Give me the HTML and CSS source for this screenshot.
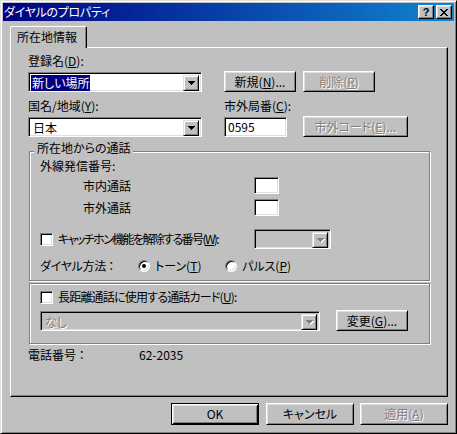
FILE: index.html
```html
<!DOCTYPE html>
<html lang="ja">
<head>
<meta charset="utf-8">
<title>ダイヤルのプロパティ</title>
<link rel="stylesheet" href="styles.css">
</head>
<body>
<div class="window">
  <div class="titlebar">
    <span class="title">ダイヤルのプロパティ</span>
    <div class="tb-buttons">
      <span class="tb-btn tb-help">?</span>
      <span class="tb-btn tb-close"><svg width="8" height="7" viewBox="0 0 8 7" shape-rendering="crispEdges"><path d="M0 0h2v1H0zM6 0h2v1H6zM1 1h2v1H1zM5 1h2v1H5zM2 2h4v1H2zM3 3h2v1H3zM2 4h4v1H2zM1 5h2v1H1zM5 5h2v1H5zM0 6h2v1H0zM6 6h2v1H6z" fill="#000"/></svg></span>
    </div>
  </div>

  <div class="tabs"><div class="tab">所在地情報</div></div>

  <div class="panel">
    <div class="row row-first">
      <div class="col col-combo">
        <div class="label">登録名(<u>D</u>):</div>
        <div class="field combo">
          <span class="combo-text"><span class="sel">新しい場所</span></span>
          <span class="dd"><svg width="7" height="4" viewBox="0 0 7 4" shape-rendering="crispEdges"><path d="M0 0h7v1H0zM1 1h5v1H1zM2 2h3v1H2zM3 3h1v1H3z" fill="#000"/></svg></span>
        </div>
      </div>
      <button class="btn btn-new">新規(<u>N</u>)...</button>
      <button class="btn btn-del disabled">削除(<u>R</u>)</button>
    </div>

    <div class="row row-second">
      <div class="col col-combo">
        <div class="label">国名/地域(<u>Y</u>):</div>
        <div class="field combo">
          <span class="combo-text combo-plain">日本</span>
          <span class="dd"><svg width="7" height="4" viewBox="0 0 7 4" shape-rendering="crispEdges"><path d="M0 0h7v1H0zM1 1h5v1H1zM2 2h3v1H2zM3 3h1v1H3z" fill="#000"/></svg></span>
        </div>
      </div>
      <div class="col col-area">
        <div class="label">市外局番(<u>C</u>):</div>
        <div class="field edit-area">0595</div>
      </div>
      <button class="btn btn-areacode disabled">市外コード(<u>E</u>)...</button>
    </div>

    <div class="group group-calls">
      <div class="group-title">所在地からの通話</div>
      <div class="g-label">外線発信番号:</div>
      <div class="g-row g-row-edit g-row-local">
        <span class="g-left g-indent">市内通話</span>
        <span class="field edit-small"></span>
      </div>
      <div class="g-row g-row-edit g-row-long">
        <span class="g-left g-indent">市外通話</span>
        <span class="field edit-small"></span>
      </div>
      <div class="g-row g-row-wait">
        <span class="g-left check-item">
          <span class="field checkbox"></span>
          <span class="check-label label-wait">キャッチホン機能を解除する番号(<u>W</u>):</span>
        </span>
        <span class="field combo combo-disabled combo-wait">
          <span class="combo-text"></span>
          <span class="dd"><svg width="8" height="5" viewBox="0 0 8 5" shape-rendering="crispEdges"><path d="M1 1h7v1H1zM2 2h5v1H2zM3 3h3v1H3zM4 4h1v1H4z" fill="#fff"/><path d="M0 0h7v1H0zM1 1h5v1H1zM2 2h3v1H2zM3 3h1v1H3z" fill="#808080"/></svg></span>
        </span>
      </div>
      <div class="g-row g-row-dial">
        <span class="dial-label">ダイヤル方法 ：</span>
        <span class="radio-item radio-tone">
          <span class="field radio"><span class="dot"></span></span>
          <span class="radio-label">トーン(<u>T</u>)</span>
        </span>
        <span class="radio-item">
          <span class="field radio"></span>
          <span class="radio-label">パルス(<u>P</u>)</span>
        </span>
      </div>
    </div>

    <div class="group group-card">
      <div class="check-item">
        <span class="field checkbox"></span>
        <span class="check-label label-card">長距離通話に使用する通話カード(<u>U</u>):</span>
      </div>
      <div class="card-row">
        <span class="field combo combo-disabled combo-card">
          <span class="combo-text disabled-text">なし</span>
          <span class="dd"><svg width="8" height="5" viewBox="0 0 8 5" shape-rendering="crispEdges"><path d="M1 1h7v1H1zM2 2h5v1H2zM3 3h3v1H3zM4 4h1v1H4z" fill="#fff"/><path d="M0 0h7v1H0zM1 1h5v1H1zM2 2h3v1H2zM3 3h1v1H3z" fill="#808080"/></svg></span>
        </span>
        <button class="btn btn-change">変更(<u>G</u>)...</button>
      </div>
    </div>

    <div class="phone-row">
      <span class="phone-label">電話番号 ：</span>
      <span class="phone-value">62-2035</span>
    </div>
  </div>

  <div class="footer">
    <button class="btn btn-footer btn-default">OK</button>
    <button class="btn btn-footer btn-cancel">キャンセル</button>
    <button class="btn btn-footer btn-apply disabled">適用(<u>A</u>)</button>
  </div>
</div>
</body>
</html>
```

FILE: styles.css
```css
* {
  box-sizing: border-box;
}

html,
body {
  margin: 0;
  padding: 0;
}

body {
  width: 457px;
  height: 434px;
  overflow: hidden;
  background: #c0c0c0;
  color: #000;
  font-family: "Noto Sans CJK JP", "Noto Sans", sans-serif;
  font-size: 12px;
  line-height: 14px;
  font-feature-settings: "palt";
}

u {
  text-decoration: underline;
  text-underline-offset: 1px;
}

/* window frame */
.window {
  width: 457px;
  height: 434px;
  padding: 2px;
  background: #c0c0c0;
  border: 1px solid;
  border-color: #dfdfdf #000 #000 #dfdfdf;
  box-shadow: inset 1px 1px #fff, inset -1px -1px #808080;
  display: flex;
  flex-direction: column;
}

.titlebar {
  height: 18px;
  flex: none;
  display: flex;
  align-items: center;
  justify-content: space-between;
  padding: 0 2px 0 1px;
  background: linear-gradient(to right, #000080, #1084d0);
  color: #fff;
}

.title {
  white-space: nowrap;
  letter-spacing: -0.3px;
}

.tb-buttons {
  display: flex;
  gap: 2px;
}

.tb-btn {
  width: 16px;
  height: 14px;
  display: flex;
  align-items: center;
  justify-content: center;
  background: #c0c0c0;
  color: #000;
  border: 1px solid;
  border-color: #fff #000 #000 #fff;
  box-shadow: inset -1px -1px #808080, inset 1px 1px #dfdfdf;
}

.tb-help {
  font-family: "Liberation Sans", sans-serif;
  font-weight: bold;
  font-size: 11px;
  line-height: 1;
  padding-top: 1px;
}

/* tabs */
.tabs {
  margin: 5px 0 0 7px;
  display: flex;
}

.tab {
  position: relative;
  z-index: 1;
  width: 77px;
  height: 22px;
  margin-bottom: -1px;
  padding: 3px 0 0 6px;
  background: #c0c0c0;
  border-top: 1px solid #fff;
  border-left: 1px solid #fff;
  border-right: 1px solid #000;
  border-radius: 2px 2px 0 0;
  box-shadow: inset -1px 0 #808080;
  white-space: nowrap;
}

.panel {
  width: 438px;
  height: 350px;
  margin-left: 7px;
  padding: 6px 0 0 17px;
  border: 1px solid;
  border-color: #fff #000 #000 #fff;
  box-shadow: inset -1px -1px #808080;
}

/* generic controls */
.field {
  background: #fff;
  border: 1px solid;
  border-color: #808080 #fff #fff #808080;
  box-shadow: inset 1px 1px #000, inset -1px -1px #dfdfdf;
}

.btn {
  font: inherit;
  font-feature-settings: "palt";
  height: 21px;
  padding: 0;
  margin: 0;
  display: flex;
  align-items: center;
  justify-content: center;
  white-space: nowrap;
  background: #c0c0c0;
  color: #000;
  border: 1px solid;
  border-color: #fff #000 #000 #fff;
  box-shadow: inset 1px 1px #dfdfdf, inset -1px -1px #808080;
}

.btn.disabled,
.disabled-text {
  color: #808080;
  text-shadow: 1px 1px #fff;
}

.combo {
  display: flex;
  height: 20px;
  padding: 2px;
}

.combo-text {
  flex: 1;
  line-height: 16px;
  white-space: nowrap;
}

.combo-plain {
  padding-left: 2px;
}

.sel {
  display: inline-block;
  height: 16px;
  padding: 0 1px;
  background: #000080;
  color: #fff;
  vertical-align: top;
}

.dd {
  width: 16px;
  height: 16px;
  flex: none;
  display: flex;
  align-items: center;
  justify-content: center;
  background: #c0c0c0;
  border: 1px solid;
  border-color: #dfdfdf #000 #000 #dfdfdf;
  box-shadow: inset 1px 1px #fff, inset -1px -1px #808080;
}

.combo-disabled {
  background: #c0c0c0;
}

.combo-disabled .dd svg {
  margin-left: 1px;
}

.checkbox {
  width: 13px;
  height: 13px;
  flex: none;
}

.radio {
  width: 12px;
  height: 12px;
  flex: none;
  border-radius: 50%;
  display: flex;
  align-items: center;
  justify-content: center;
}

.dot {
  width: 4px;
  height: 4px;
  border-radius: 50%;
  background: #000;
}

/* first rows */
.row {
  display: flex;
  align-items: flex-end;
}

.row-second {
  margin-top: 7px;
}

.label {
  height: 14px;
  margin-bottom: 4px;
  white-space: nowrap;
}

.col-combo {
  width: 174px;
  flex: none;
}

.btn-new {
  width: 72px;
  margin-left: 22px;
}

.btn-del {
  width: 72px;
  margin-left: 7px;
}

.col-area {
  width: 63px;
  flex: none;
  margin-left: 22px;
}

.edit-area {
  height: 20px;
  padding-left: 3px;
  line-height: 18px;
}

.btn-areacode {
  width: 105px;
  margin-left: 16px;
}

/* group boxes */
.group {
  width: 401px;
  margin-left: 1px;
  border: 1px solid #808080;
  box-shadow: inset 1px 1px #fff, 1px 1px #fff;
}

.group-calls {
  margin-top: 14px;
  padding: 0 0 4px 10px;
}

.group-title {
  width: max-content;
  margin: -11px 0 0 -6px;
  padding: 0 2px 0 3px;
  background: #c0c0c0;
}

.g-label {
  margin-top: 4px;
}

.g-row {
  display: flex;
  align-items: center;
}

.g-row-edit {
  height: 17px;
}

.g-row-local {
  margin-top: 4px;
}

.g-row-long {
  margin-top: 5px;
}

.g-left {
  width: 214px;
  flex: none;
  white-space: nowrap;
}

.g-indent {
  padding-left: 43px;
}

.edit-small {
  width: 25px;
  height: 17px;
}

.g-row-wait {
  height: 20px;
  margin-top: 13px;
}

.check-item {
  display: flex;
  align-items: center;
}

.check-label {
  margin-left: 5px;
  white-space: nowrap;
}

.label-wait {
  letter-spacing: -1.6px;
}

.label-card {
  letter-spacing: -0.8px;
}

.combo-wait {
  width: 77px;
}

.g-row-dial {
  height: 20px;
  margin-top: 7px;
}

.dial-label {
  width: 98px;
  flex: none;
  white-space: nowrap;
  letter-spacing: -0.3px;
}

.radio-item {
  display: flex;
  align-items: center;
}

.radio-tone {
  width: 87px;
}

.radio-label {
  margin-left: 5px;
  white-space: nowrap;
}

.group-card {
  margin-top: 2px;
  padding: 6px 0 12px 10px;
}

.group-card .check-item {
  height: 14px;
}

.card-row {
  display: flex;
  align-items: flex-end;
  margin-top: 6px;
}

.combo-card {
  width: 280px;
}

.combo-card .combo-text {
  padding-left: 2px;
}

.btn-change {
  width: 72px;
  margin-left: 16px;
}

.phone-row {
  display: flex;
  margin-top: 4px;
}

.phone-label {
  width: 111px;
  flex: none;
  white-space: nowrap;
}

/* footer buttons */
.footer {
  display: flex;
  justify-content: flex-end;
  margin-top: 6px;
  padding-right: 6px;
}

.btn-footer {
  width: 88px;
  height: 22px;
}

.btn-default {
  border-color: #000;
  box-shadow: inset 1px 1px #fff, inset -1px -1px #000, inset 2px 2px #dfdfdf, inset -2px -2px #808080;
}

.btn-cancel {
  margin-left: 7px;
}

.btn-apply {
  margin-left: 6px;
}
```
